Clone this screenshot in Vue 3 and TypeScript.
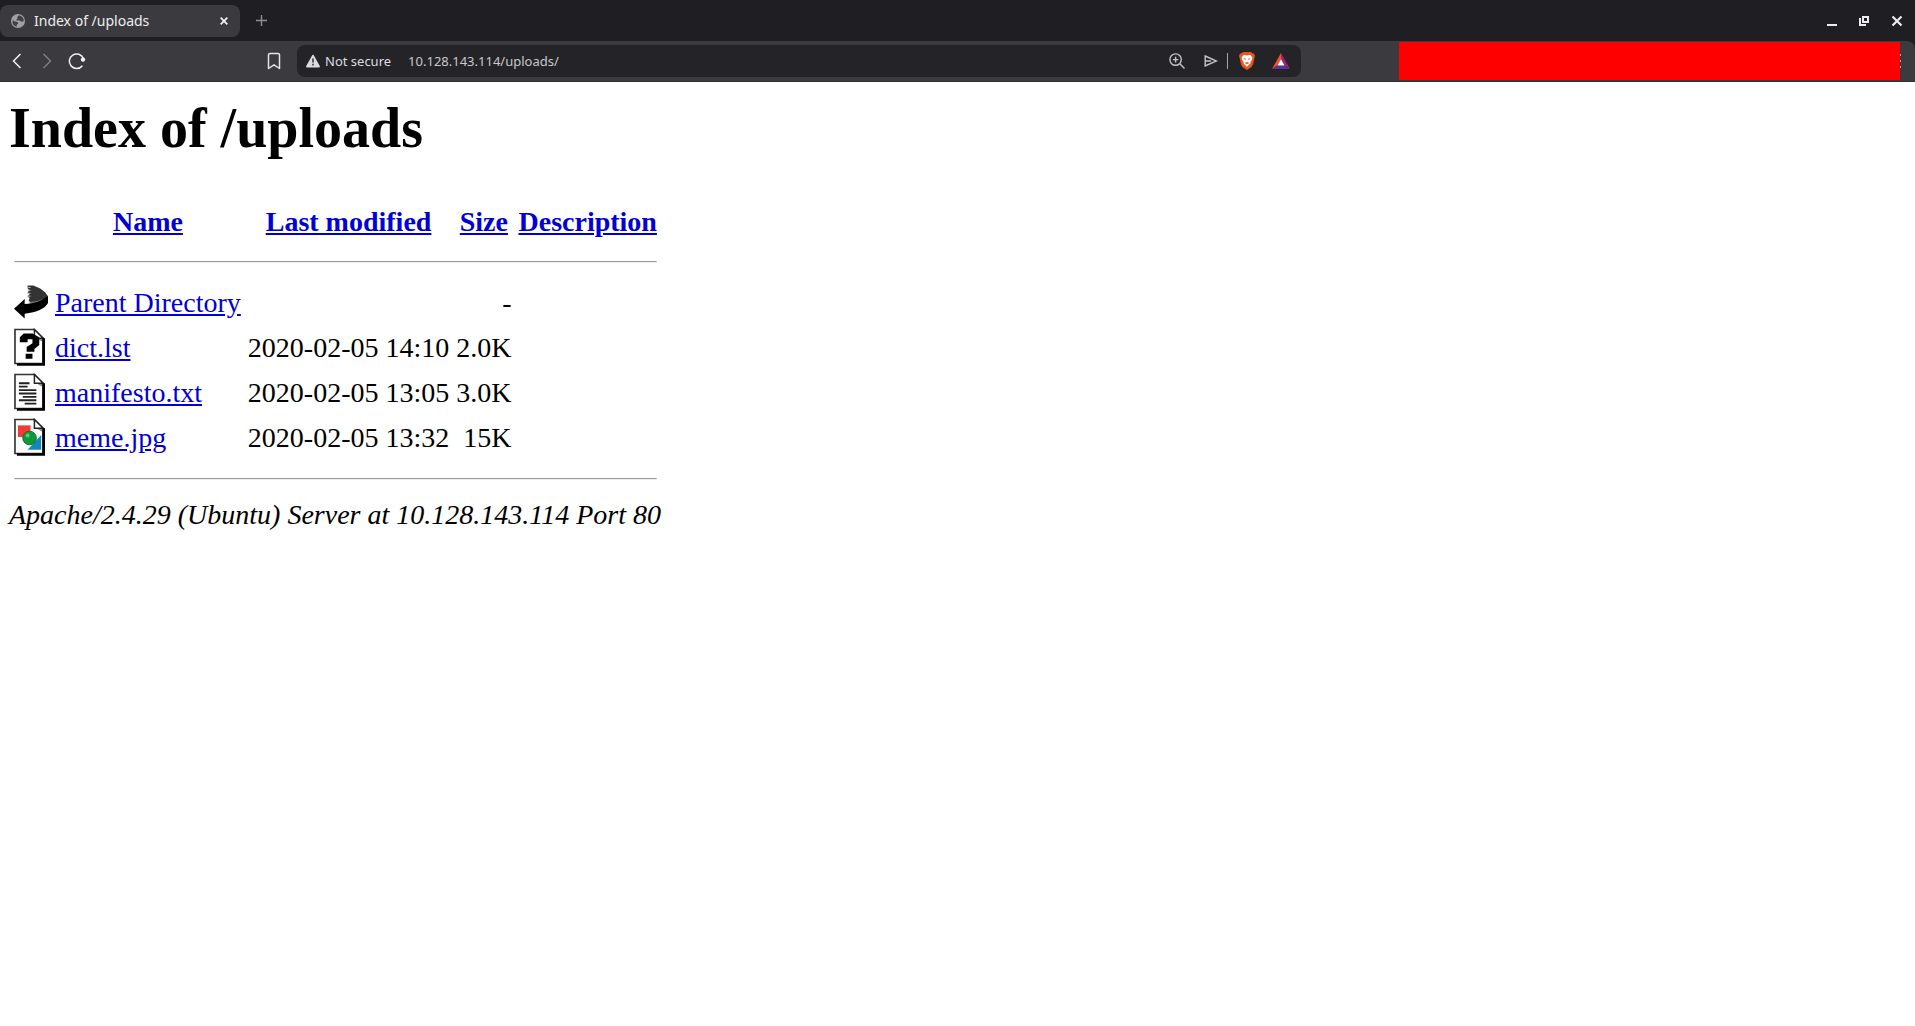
<script setup lang="ts">
import { ref } from 'vue'

type Kind = 'back' | 'unknown' | 'text' | 'image'

interface Entry {
  kind: Kind
  name: string
  modified: string
  size: string
}

const address = ref('10.128.143.114/uploads/')

const columns: string[] = ['Name', 'Last modified', 'Size', 'Description']

const entries: Entry[] = [
  { kind: 'back', name: 'Parent Directory', modified: '', size: '-' },
  { kind: 'unknown', name: 'dict.lst', modified: '2020-02-05 14:10', size: '2.0K' },
  { kind: 'text', name: 'manifesto.txt', modified: '2020-02-05 13:05', size: '3.0K' },
  { kind: 'image', name: 'meme.jpg', modified: '2020-02-05 13:32', size: '15K' },
]
</script>

<template>
  <div class="browser">
    <header class="chrome">
      <div class="tabstrip">
        <div class="tab">
          <svg class="globe" width="14" height="14" viewBox="0 0 14 14" aria-hidden="true">
            <circle cx="7" cy="7" r="7" fill="#9fa1a4" />
            <path d="M1.6 6.2 4 7.4l2.6.6.6 1.6-1.4 1.2-.2 2A6 6 0 0 1 1.6 6.2ZM7.6 1.4 6.2 3.2l.4 1.4-1.4.8.8 1.2 3-.2 1.2 1.4 2.6-.6A6 6 0 0 0 9 1.6Z" fill="#424147" />
          </svg>
          <span class="tab-title">Index of /uploads</span>
          <button class="icon" aria-label="Close tab">
            <svg width="8" height="8" viewBox="0 0 8 8"><path d="M.7.7l6.6 6.6M7.3.7.7 7.3" stroke="#f0f0f2" stroke-width="1.8" /></svg>
          </button>
        </div>
        <button class="icon new-tab" aria-label="New tab">
          <svg width="11" height="11" viewBox="0 0 11 11"><path d="M5.5 0v11M0 5.5h11" stroke="#8f8f93" stroke-width="1.4" /></svg>
        </button>
        <div class="window-buttons">
          <button class="icon" aria-label="Minimize">
            <svg width="12" height="12" viewBox="0 0 12 12"><path d="M0 10h10" stroke="#ececef" stroke-width="2" /></svg>
          </button>
          <button class="icon" aria-label="Restore">
            <svg width="12" height="12" viewBox="0 0 12 12" fill="none" stroke="#ececef" stroke-width="2"><path d="M4 2h5v5H4zM1 3v7h6" /></svg>
          </button>
          <button class="icon" aria-label="Close window">
            <svg width="12" height="12" viewBox="0 0 12 12"><path d="M1.500 1.500l9 9M10.500 1.500l-9 9" stroke="#ececef" stroke-width="2.200" /></svg>
          </button>
        </div>
      </div>

      <div class="toolbar">
        <nav class="nav">
          <button class="icon" aria-label="Back">
            <svg width="20" height="20" viewBox="0 0 20 20" fill="none" stroke="#f0f0f2" stroke-width="1.500"><path d="M13.500 3 6.500 10l7 7" /></svg>
          </button>
          <button class="icon" aria-label="Forward">
            <svg width="20" height="20" viewBox="0 0 20 20" fill="none" stroke="#7d7d81" stroke-width="1.500"><path d="M6.500 3l7 7-7 7" /></svg>
          </button>
          <button class="icon" aria-label="Reload">
            <svg width="20" height="20" viewBox="0 0 20 20"><path d="M16.400 7.500A7.300 7.300 0 1 0 15.400 14.700" fill="none" stroke="#f0f0f2" stroke-width="1.500" /><circle cx="16" cy="8.600" r="2.200" fill="#f0f0f2" /></svg>
          </button>
        </nav>
        <button class="icon bookmark" aria-label="Bookmark this page">
          <svg width="14" height="18" viewBox="0 0 14 18" fill="none" stroke="#e4e4e8" stroke-width="1.500" stroke-linejoin="round"><path d="M1.500 16.500V3q0-1.500 1.500-1.500h8q1.500 0 1.500 1.500v13.500L7 12.800Z" /></svg>
        </button>

        <form class="omnibox" @submit.prevent>
          <svg width="14" height="14" viewBox="0 0 14 14" aria-hidden="true">
            <path d="M7 1.600 13 12.500H1Z" fill="#dcdce0" stroke="#dcdce0" stroke-width="1.800" stroke-linejoin="round" />
            <path d="M7 4.500v4M7 9.800v1.600" stroke="#3a393e" stroke-width="1.600" />
          </svg>
          <label class="security" for="address">Not secure</label>
          <input id="address" v-model="address" class="address" type="text" spellcheck="false" />
          <div class="actions">
            <button class="icon zoom" type="button" aria-label="Zoom">
              <svg width="16" height="16" viewBox="0 0 16 16" fill="none" stroke="#c4c4c8" stroke-width="1.400"><circle cx="6.600" cy="6.600" r="5.700" /><path d="M10.800 10.800l4.700 4.700M6.600 3.800v5.600M3.800 6.600h5.600" /></svg>
            </button>
            <button class="icon" type="button" aria-label="Share">
              <svg width="14" height="12" viewBox="0 0 14 12" fill="none" stroke="#c4c4c8" stroke-width="1.400"><path d="M1.200 1l11.300 5-11.300 5zM1.200 6h6" /></svg>
            </button>
            <span class="divider"></span>
            <button class="icon brave" type="button" aria-label="Shields">
              <svg width="16" height="18" viewBox="0 0 16 18">
                <path d="M4 0h8l1.500 1.600 1.500-.2 1 2.600-.5 1.500-1.500 7L12.500 15 8 18l-4.500-3L2 12.500l-1.500-7L0 4l1-2.600 1.500.2Z" fill="#e9561f" />
                <path d="M4.800 2.800 8 3.400l3.200-.6 2.200 2.700-.4 2.300-1.400 2-.4 2L8 14.800l-3.200-3-.4-2-1.400-2-.4-2.300Z" fill="#fff" />
                <path d="M4.600 6.200l2.400.6-.8 1.400ZM11.400 6.200 9 6.800l.8 1.400ZM5.600 11l2.400-.9 2.400.9L8 12.300Z" fill="#e9561f" />
              </svg>
            </button>
            <button class="icon" type="button" aria-label="Rewards">
              <svg width="18" height="16" viewBox="0 0 18 16">
                <path d="M9 0 0 16l5.500-3.500L9 6Z" fill="#f4522b" />
                <path d="M9 0l9 16-5.500-3.500L9 6Z" fill="#9a2375" />
                <path d="M0 16h18l-5.500-3.500h-7Z" fill="#5a3399" />
                <path d="M9 6l3.500 6.500h-7Z" fill="#fff" />
              </svg>
            </button>
          </div>
        </form>

        <div class="redacted"></div>
        <button class="icon menu" aria-label="Menu">
          <svg width="2" height="14" viewBox="0 0 2 14" fill="#a9a9ad"><path d="M0 0h1v2H0zM0 6h1v2H0zM0 12h1v2H0z" /></svg>
        </button>
      </div>
    </header>

    <main class="page">
      <h1>Index of /uploads</h1>
      <table>
        <thead>
          <tr>
            <th class="glyph"><div class="blank"></div></th>
            <th v-for="column in columns" :key="column"><a href="#">{{ column }}</a></th>
          </tr>
        </thead>
        <tbody>
          <tr><td colspan="5"><hr /></td></tr>
          <tr v-for="entry in entries" :key="entry.name">
            <td class="glyph">
              <svg v-if="entry.kind === 'back'" viewBox="0 0 35 39" aria-hidden="true">
                <path d="M14 2h6l7 3 5 4 3 4v4l-12 5-8-4 1-3-2-2 2-2-2-2 2-2-2-2Z" fill="#333" />
                <path d="M14 4h3M14 7h3M14 10h3M14 13h3" stroke="#bbb" />
                <path d="M16 19l8-1 6-2-7 5-7 1Z" fill="#777" />
                <path d="M35 13v7q-5 9-24 11v5L0 26l11-10v5q13 0 24-8Z" fill="#000" />
              </svg>
              <svg v-else viewBox="0 0 35 39" aria-hidden="true">
                <path d="M1 1h20l9 9v26H1Z" fill="#fff" stroke="#333" stroke-width="1.700" />
                <path d="M21 9h9v5Z" fill="#888" />
                <path d="M21 1v9h9Z" fill="#fff" stroke="#222" stroke-width="1.500" />
                <path d="M30.500 10v27H3" fill="none" stroke="#000" stroke-width="2.800" />
                <g v-if="entry.kind === 'unknown'" fill="#000">
                  <path d="M6 14V9l4-4h9l7 4v8l-5 4v3h-8v-5l6-4v-4h-5v3ZM12 26h7v5h-7Z" />
                </g>
                <path v-else-if="entry.kind === 'text'" d="M5 10h11M5 13.500h9M5 17h18M5 20.500h18M9 24h14M5 27.500h18M11 31h12" fill="none" stroke="#222" stroke-width="1.900" />
                <g v-else>
                  <path d="M4 7h13v12H4Z" fill="#f33b35" />
                  <path d="M28 17v15H14Z" fill="#1687bd" />
                  <circle cx="16" cy="20" r="7" fill="#0d9a3c" stroke="#176b2d" />
                  <circle cx="14" cy="17.500" r="2" fill="#5fc97a" />
                </g>
              </svg>
            </td>
            <td><a href="#">{{ entry.name }}</a></td>
            <td class="right">{{ entry.modified }}</td>
            <td class="right">{{ entry.size }}</td>
            <td></td>
          </tr>
          <tr><td colspan="5"><hr class="bottom-rule" /></td></tr>
        </tbody>
      </table>
      <address>Apache/2.4.29 (Ubuntu) Server at 10.128.143.114 Port 80</address>
    </main>
  </div>
</template>

<style>
body {
  margin: 0;
  background: #fff;
}
</style>

<style scoped>
.browser {
  min-height: 100vh;
  background: #fff;
}

.chrome {
  background: #1f1e23;
  font-family: "Noto Sans", sans-serif;
  font-size: 14px;
  line-height: 20px;
}

.icon {
  display: flex;
  align-items: center;
  justify-content: center;
  flex: none;
  padding: 0;
  border: 0;
  background: none;
}

.tabstrip {
  display: flex;
  align-items: center;
  height: 41px;
}

.tab {
  display: flex;
  align-items: center;
  box-sizing: border-box;
  width: 240px;
  height: 32px;
  padding: 0 12px 0 11px;
  border-radius: 8px;
  background: #3b3a3f;
  color: #ededf0;
}

.tab-title {
  flex: 1;
  margin-left: 9px;
}

.new-tab {
  margin-left: 16px;
}

.window-buttons {
  display: flex;
  gap: 20px;
  margin-left: auto;
  margin-right: 12px;
}

.toolbar {
  display: flex;
  align-items: center;
  box-sizing: border-box;
  height: 41px;
  border-bottom: 1px solid #2c2b30;
  border-top-right-radius: 8px;
  background: #3b3a3f;
}

.nav {
  display: flex;
  gap: 10px;
  margin-left: 7px;
}

.bookmark {
  margin-left: 180px;
}

.omnibox {
  display: flex;
  flex: 1;
  align-items: center;
  box-sizing: border-box;
  height: 32px;
  margin: 0 98px 0 16px;
  padding: 0 11px 0 9px;
  border-radius: 8px;
  background: #242328;
  font-size: 13px;
}

.security {
  margin-left: 5px;
  color: #dcdce0;
}

.address {
  flex: 1;
  min-width: 0;
  margin-left: 17px;
  padding: 0;
  border: 0;
  outline: 0;
  background: none;
  color: #c8c8cc;
  font: inherit;
}

.actions {
  display: flex;
  align-items: center;
}

.zoom {
  margin-right: 19px;
}

.divider {
  width: 1px;
  height: 16px;
  margin: 0 11px 0 9px;
  background: #a4a4a8;
}

.brave {
  margin-right: 17px;
}

.redacted {
  width: 501px;
  height: 38px;
  background: #f00;
}

.menu {
  margin-right: 13px;
}

.page {
  padding: 14px 9px;
  color: #000;
  font-family: "Liberation Serif", serif;
  font-size: 28px;
  line-height: 32px;
}

h1 {
  margin: 0 0 38px;
  font-size: 56px;
  line-height: 64px;
}

table {
  border-spacing: 3px 2px;
}

th,
td {
  padding: 2px;
}

.glyph svg,
.blank {
  display: block;
  width: 34px;
  height: 39px;
}

.right {
  text-align: right;
}

a {
  color: #0000d6;
}

hr {
  margin: 14px 0;
  border: 1px solid #eee;
  border-top-color: #999;
}

.bottom-rule {
  margin: 15px 0;
}
</style>
